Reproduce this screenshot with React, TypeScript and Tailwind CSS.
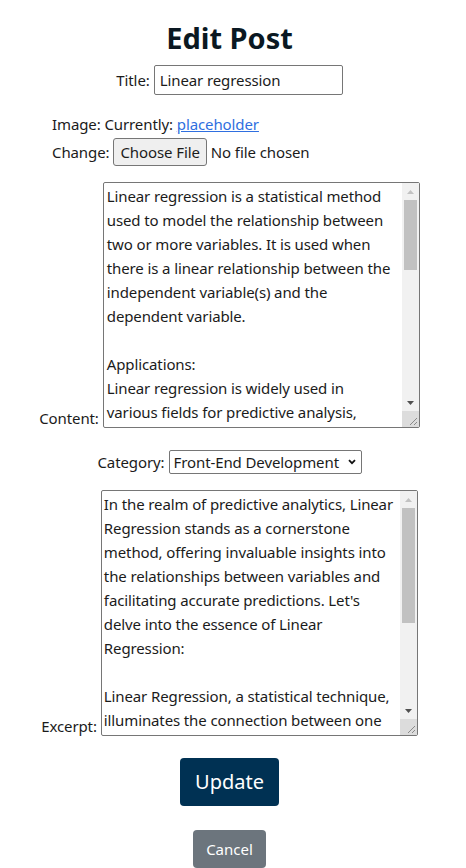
import { FC } from "react";

const contentText = `Linear regression is a statistical method used to model the relationship between two or more variables. It is used when there is a linear relationship between the independent variable(s) and the dependent variable.

Applications:
Linear regression is widely used in various fields for predictive analysis, trend forecasting and understanding the relationships between variables. It is a fundamental tool in statistics and machine learning.`;

const excerptText = `In the realm of predictive analytics, Linear Regression stands as a cornerstone method, offering invaluable insights into the relationships between variables and facilitating accurate predictions. Let's delve into the essence of Linear Regression:

Linear Regression, a statistical technique, illuminates the connection between one dependent variable and one or more independent variables.`;

interface FakeScrollAreaProps {
  value: string;
  thumbHeight: number;
  padX: string;
}

// textarea with a drawn scrollbar, since the headless page hides native ones
const FakeScrollArea: FC<FakeScrollAreaProps> = ({
  value,
  thumbHeight,
  padX,
}) => {
  return (
    <div className="flex h-[246px] w-[317px] rounded-[2px] border border-[#767676] bg-white">
      <textarea
        defaultValue={value}
        className={`min-w-0 flex-1 resize-none overflow-hidden py-[1px] leading-[24px] tracking-[-0.12px] outline-none ${padX}`}
      />
      <div className="flex w-[17px] flex-col bg-[#f1f1f1]">
        <div className="flex h-[17px] items-center justify-center">
          <svg width="7" height="4" viewBox="0 0 7 4">
            <path d="M3.5 0L7 4H0z" fill="#c2c2c2" />
          </svg>
        </div>
        <div
          className="mx-[2px] bg-[#c1c1c1]"
          style={{ height: thumbHeight }}
        />
        <div className="flex-1" />
        <div className="flex h-[17px] items-center justify-center">
          <svg width="7" height="4" viewBox="0 0 7 4">
            <path d="M0 0H7L3.5 4z" fill="#505050" />
          </svg>
        </div>
        <div className="flex h-[16px] items-end justify-end bg-[#dcdcdc] p-[2px]">
          <svg width="8" height="8" viewBox="0 0 8 8">
            <path d="M8 1L1 8M8 5L5 8" stroke="#8a8a8a" strokeWidth="1" />
          </svg>
        </div>
      </div>
    </div>
  );
};

const EditPost: FC = () => {
  return (
    <div
      className="min-h-screen w-[459px] bg-white text-[15px] tracking-[-0.1px] text-[#1b1b1b]"
      style={{ fontFamily: '"Noto Sans", "Open Sans", sans-serif' }}
    >
      <h1 className="pt-[17px] text-center text-[29px] font-bold leading-[42px] tracking-normal text-[#0a1822]">
        Edit Post
      </h1>

      <form className="flex flex-col">
        <div className="mt-[6px] flex items-center justify-center gap-[4px]">
          <label>Title:</label>
          <input
            defaultValue="Linear regression"
            className="h-[30px] w-[189px] rounded-[2px] border border-[#767676] px-[5px] outline-none"
          />
        </div>

        <div className="mt-[16px] pl-[52px] leading-[27px]">
          <div>
            Image: Currently:{" "}
            <a href="#" className="text-[#2f6fe0] underline">
              placeholder
            </a>
          </div>
          <div className="flex items-center gap-[4px]">
            <span>Change:</span>
            <button
              type="button"
              className="h-[28px] rounded-[3px] border border-[#767676] bg-[#efefef] px-[6px]"
            >
              Choose File
            </button>
            <span>No file chosen</span>
          </div>
        </div>

        <div className="mt-[16px] flex items-end justify-center gap-[4px]">
          <label className="leading-[20px]">Content:</label>
          <FakeScrollArea
            value={contentText}
            thumbHeight={70}
            padX="pl-[3px] pr-[6px]"
          />
        </div>

        <div className="mt-[22px] flex items-center justify-center gap-[4px]">
          <label>Category:</label>
          <div className="relative">
            <select
              defaultValue="fe"
              className="h-[24px] w-[193px] appearance-none rounded-[2px] border border-[#767676] pl-[4px] pr-[18px] outline-none"
            >
              <option value="fe">Front-End Development</option>
              <option value="be">Back-End Development</option>
              <option value="ds">Data Science</option>
            </select>
            <svg
              className="pointer-events-none absolute right-[6px] top-[9px]"
              width="8"
              height="6"
              viewBox="0 0 8 6"
            >
              <path
                d="M1 1.2L4 4.2L7 1.2"
                fill="none"
                stroke="#111"
                strokeWidth="1.8"
              />
            </svg>
          </div>
        </div>

        <div className="mt-[16px] flex items-end justify-center gap-[4px]">
          <label className="leading-[20px]">Excerpt:</label>
          <FakeScrollArea
            value={excerptText}
            thumbHeight={115}
            padX="px-[2px]"
          />
        </div>

        <div className="mt-[22px] flex justify-center">
          <button
            type="button"
            className="h-[48px] w-[99px] rounded-[4px] bg-[#003153] text-[20px] tracking-normal text-white"
          >
            Update
          </button>
        </div>

        <div className="mt-[24px] flex justify-center">
          <button
            type="button"
            className="h-[38px] w-[73px] rounded-[4px] bg-[#6c757d] tracking-normal text-white"
          >
            Cancel
          </button>
        </div>
      </form>
    </div>
  );
};

export default function App() {
  return <EditPost />;
}
